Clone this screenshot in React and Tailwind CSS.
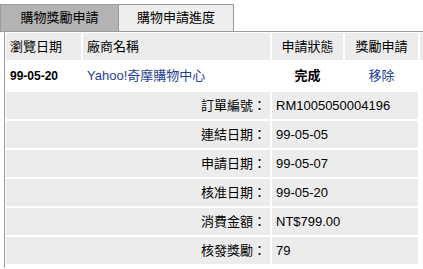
import React from 'react';

const details = [
  ['訂單編號：', 'RM1005050004196'],
  ['連結日期：', '99-05-05'],
  ['申請日期：', '99-05-07'],
  ['核准日期：', '99-05-20'],
  ['消費金額：', 'NT$799.00'],
  ['核發獎勵：', '79'],
];

const font = { fontFamily: '"Liberation Sans", "Noto Sans CJK TC", sans-serif' };

export default function App() {
  return (
    <div className="w-[423px] h-[269px] bg-white pt-1 text-[13px] text-black overflow-hidden" style={font}>
      <div className="flex h-[28px] border-b border-[#9a9a9a]">
        <div className="w-[119px] h-[27px] flex items-center justify-center bg-[#b3b3b3] border border-b-0 border-[#9a9a9a]">
          購物獎勵申請
        </div>
        <div className="w-[115px] h-[27px] flex items-center justify-center bg-[#eeeeee] border border-l-0 border-b-0 border-[#9a9a9a]">
          購物申請進度
        </div>
      </div>
      <div className="ml-[4px] border-l border-[#9a9a9a] pl-[1px] pt-[1px] pb-[4px]">
        <div className="grid grid-cols-[75px_187px_71px_73px_1fr] gap-[2px]">
          <div className="h-[27px] bg-[#ececec] flex items-center pl-[4px]">瀏覽日期</div>
          <div className="h-[27px] bg-[#ececec] flex items-center pl-[4px]">廠商名稱</div>
          <div className="h-[27px] bg-[#ececec] flex items-center justify-center">申請狀態</div>
          <div className="h-[27px] bg-[#ececec] flex items-center justify-center">獎勵申請</div>
          <div className="h-[27px] bg-[#ececec]"></div>

          <div className="h-[28px] flex items-center pl-[4px] font-bold text-[12px]">99-05-20</div>
          <div className="h-[28px] flex items-center pl-[4px] text-[#1f3f96]">Yahoo!奇摩購物中心</div>
          <div className="h-[28px] flex items-center justify-center font-bold">完成</div>
          <div className="h-[28px] flex items-center justify-center text-[#1f3f96]">移除</div>
          <div className="h-[28px]"></div>

          {details.map(([label, value]) => (
            <React.Fragment key={label}>
              <div className="col-span-2 h-[27px] bg-[#ececec] flex items-center justify-end pr-[4px]">{label}</div>
              <div className="col-span-2 h-[27px] bg-[#ececec] flex items-center pl-[4px]">{value}</div>
              <div></div>
            </React.Fragment>
          ))}
        </div>
      </div>
    </div>
  );
}
